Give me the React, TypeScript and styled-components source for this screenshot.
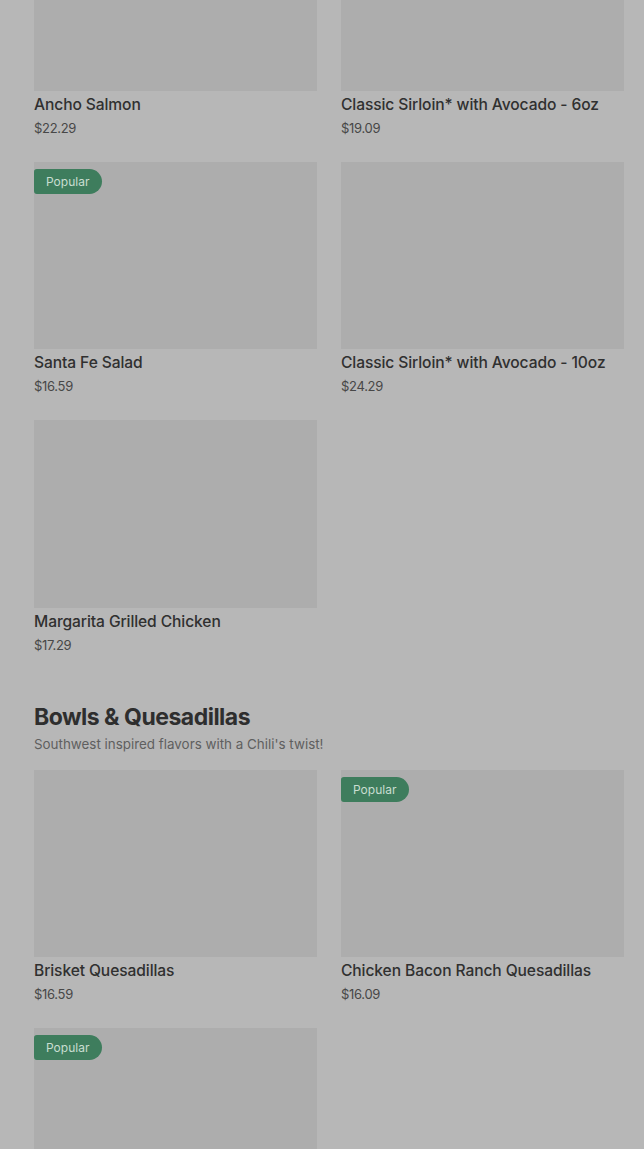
import React from "react";
import styled, { createGlobalStyle } from "styled-components";

const Global = createGlobalStyle`
  html, body { margin: 0; padding: 0; background: #b7b7b7; }
  body { font-family: Inter, "Noto Sans", Arial, sans-serif; color: #2f2f2f; }
  * { box-sizing: border-box; }
`;

const Viewport = styled.div`
  height: 100vh;
  overflow: hidden;
`;

const Page = styled.main`
  padding: 0 20px 0 34px;
  margin-top: -97px;
`;

const Section = styled.section`
  display: flex;
  flex-direction: column;
`;

const SectionHead = styled.header`
  margin-top: 46px;
  margin-bottom: 16px;
`;

const Heading = styled.h2`
  margin: 0;
  font-size: 23px;
  line-height: 32px;
  font-weight: 700;
  letter-spacing: -0.5px;
  color: #2e2e2e;
`;

const Sub = styled.p`
  margin: 1px 0 0;
  font-size: 13.4px;
  line-height: 20px;
  color: #5f5f5f;
`;

const Grid = styled.div`
  display: grid;
  grid-template-columns: 283px 283px;
  column-gap: 24px;
  row-gap: 24px;
`;

const Card = styled.article`
  display: flex;
  flex-direction: column;
`;

const Thumb = styled.div`
  position: relative;
  height: 187.5px;
  background: #adadad;
`;

const Badge = styled.span`
  position: absolute;
  top: 7px;
  left: 0;
  height: 25px;
  padding: 0 13px 0 12px;
  display: flex;
  align-items: center;
  background: #3e7d5d;
  color: #c9ddd1;
  font-size: 12px;
  border-radius: 3px 13px 13px 3px;
`;

const Title = styled.h3`
  margin: 4px 0 0;
  font-size: 15.6px;
  line-height: 20px;
  font-weight: 500;
  color: #303030;
  letter-spacing: -0.1px;
`;

const Price = styled.div`
  margin-top: 3px;
  font-size: 13px;
  line-height: 20px;
  color: #474747;
  letter-spacing: -0.3px;
`;

type Item = { name?: string; price?: string; popular?: boolean };

const first: Item[] = [
  { name: "Ancho Salmon", price: "$22.29" },
  { name: "Classic Sirloin* with Avocado - 6oz", price: "$19.09" },
  { name: "Santa Fe Salad", price: "$16.59", popular: true },
  { name: "Classic Sirloin* with Avocado - 10oz", price: "$24.29" },
  { name: "Margarita Grilled Chicken", price: "$17.29" },
];

const bowls: Item[] = [
  { name: "Brisket Quesadillas", price: "$16.59" },
  { name: "Chicken Bacon Ranch Quesadillas", price: "$16.09", popular: true },
  { popular: true },
];

const MenuCard = ({ item }: { item: Item }) => (
  <Card>
    <Thumb>{item.popular && <Badge>Popular</Badge>}</Thumb>
    {item.name && <Title>{item.name}</Title>}
    {item.price && <Price>{item.price}</Price>}
  </Card>
);

export default function App() {
  return (
    <>
      <Global />
      <Viewport>
        <Page>
          <Section>
            <Grid>
              {first.map((i, n) => (
                <MenuCard key={n} item={i} />
              ))}
            </Grid>
          </Section>
          <Section>
            <SectionHead>
              <Heading>Bowls &amp; Quesadillas</Heading>
              <Sub>Southwest inspired flavors with a Chili's twist!</Sub>
            </SectionHead>
            <Grid>
              {bowls.map((i, n) => (
                <MenuCard key={n} item={i} />
              ))}
            </Grid>
          </Section>
        </Page>
      </Viewport>
    </>
  );
}
